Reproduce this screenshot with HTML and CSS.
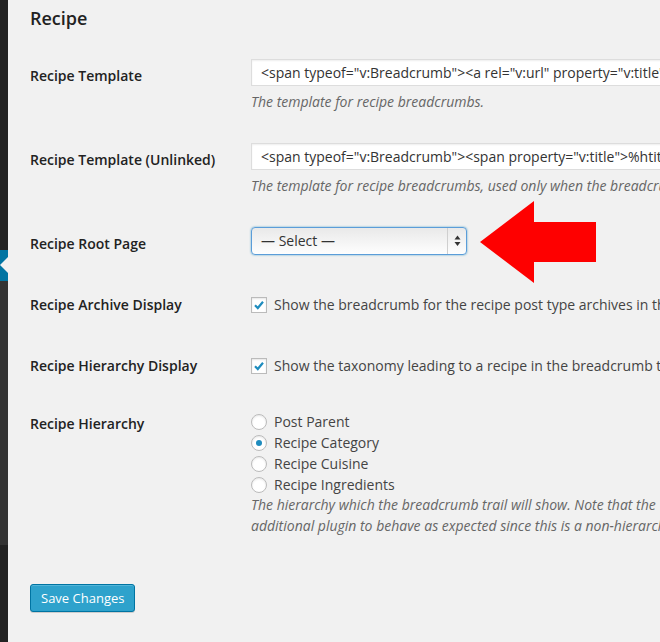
FILE: index.html
```html
<!DOCTYPE html>
<html>
<head>
<meta charset="utf-8">
<title>Recipe settings</title>
<link rel="stylesheet" href="styles.css">
</head>
<body>
<div class="admin">
  <div class="menu">
    <div class="menu-top"></div>
    <div class="menu-current"><span class="notch"></span></div>
    <div class="menu-sub"></div>
    <div class="menu-rest"></div>
  </div>
  <div class="content">
    <h3 class="section-title">Recipe</h3>
    <div class="form-table">
      <div class="row">
        <div class="label">Recipe Template</div>
        <div class="field">
          <input class="text-input" type="text" value='&lt;span typeof="v:Breadcrumb"&gt;&lt;a rel="v:url" property="v:title" href="%link%"&gt;%htitle%&lt;/a&gt;&lt;/span&gt;'>
          <p class="desc">The template for recipe breadcrumbs.</p>
        </div>
      </div>
      <div class="row">
        <div class="label">Recipe Template (Unlinked)</div>
        <div class="field">
          <input class="text-input" type="text" value='&lt;span typeof="v:Breadcrumb"&gt;&lt;span property="v:title"&gt;%htitle%&lt;/span&gt;&lt;/span&gt;'>
          <p class="desc">The template for recipe breadcrumbs, used only when the breadcrumb is not linked.</p>
        </div>
      </div>
      <div class="row row-select">
        <div class="label">Recipe Root Page</div>
        <div class="field">
          <div class="select">
            <span class="select-text">— Select —</span>
            <span class="select-arrows">
              <svg width="7" height="12" viewBox="0 0 7 12"><polygon points="3.5,0.5 6.5,4.5 0.5,4.5" fill="#333"/><polygon points="0.5,7 6.5,7 3.5,11" fill="#333"/></svg>
            </span>
          </div>
        </div>
      </div>
      <div class="row row-check">
        <div class="label">Recipe Archive Display</div>
        <div class="field">
          <label class="check-line"><span class="checkbox"><svg width="14" height="14" viewBox="0 0 14 14"><path d="M3 7.2 L5.8 10 L11 3.8" fill="none" stroke="#1e8cbe" stroke-width="2.2"/></svg></span>Show the breadcrumb for the recipe post type archives in the breadcrumb trail.</label>
        </div>
      </div>
      <div class="row row-check row-check-last">
        <div class="label">Recipe Hierarchy Display</div>
        <div class="field">
          <label class="check-line"><span class="checkbox"><svg width="14" height="14" viewBox="0 0 14 14"><path d="M3 7.2 L5.8 10 L11 3.8" fill="none" stroke="#1e8cbe" stroke-width="2.2"/></svg></span>Show the taxonomy leading to a recipe in the breadcrumb trail.</label>
        </div>
      </div>
      <div class="row row-radio">
        <div class="label">Recipe Hierarchy</div>
        <div class="field">
          <label class="radio-line"><span class="radio"></span>Post Parent</label>
          <label class="radio-line"><span class="radio checked"></span>Recipe Category</label>
          <label class="radio-line"><span class="radio"></span>Recipe Cuisine</label>
          <label class="radio-line"><span class="radio"></span>Recipe Ingredients</label>
          <p class="desc desc-multi"><span class="line">The hierarchy which the breadcrumb trail will show. Note that the "Post Parent" option may require an</span><span class="line">additional plugin to behave as expected since this is a non-hierarchical post type.</span></p>
        </div>
      </div>
    </div>
    <div class="submit">
      <button class="button-primary" type="button">Save Changes</button>
    </div>
    <svg class="callout-arrow" width="118" height="84" viewBox="0 0 118 84"><polygon points="0,41 54,0 54,21 116,21 116,61 54,61 54,82" fill="#fe0000"/></svg>
  </div>
</div>
</body>
</html>
```

FILE: styles.css
```css
html, body {
  margin: 0;
  padding: 0;
}
body {
  width: 660px;
  height: 642px;
  overflow: hidden;
  background: #f1f1f1;
  font-family: "Open Sans", "Liberation Sans", sans-serif;
  color: #444;
  font-size: 14px;
}
.admin {
  display: flex;
  min-height: 642px;
}
.menu {
  width: 8px;
  flex: none;
  display: flex;
  flex-direction: column;
  background: #222;
}
.menu-top {
  height: 250px;
}
.menu-current {
  height: 31px;
  background: #0074a2;
  position: relative;
}
.notch {
  position: absolute;
  right: 0;
  top: 7px;
  width: 0;
  height: 0;
  border-top: 8px solid transparent;
  border-bottom: 8px solid transparent;
  border-right: 8px solid #f1f1f1;
}
.menu-sub {
  height: 264px;
  background: #333;
}
.menu-rest {
  flex: 1;
}
.content {
  flex: 1;
  min-width: 0;
  padding-left: 22px;
  position: relative;
}
.section-title {
  margin: 6px 0 17px;
  font-size: 18px;
  line-height: 24px;
  font-weight: 600;
  color: #222;
}
.row {
  display: grid;
  grid-template-columns: 221px 1fr;
}
.label {
  padding-top: 20px;
  font-weight: 600;
  color: #222;
  line-height: 18px;
  white-space: nowrap;
}
.field {
  padding: 12px 0 20px;
  min-width: 0;
}
.text-input {
  display: block;
  box-sizing: border-box;
  width: 560px;
  height: 27px;
  margin: 0;
  padding: 0 9px;
  border: 1px solid #ddd;
  background: #fff;
  box-shadow: inset 0 1px 2px rgba(0, 0, 0, 0.07);
  font-family: "Open Sans", "Liberation Sans", sans-serif;
  font-size: 14px;
  color: #333;
  outline: none;
}
.desc {
  margin: 7px 0 0;
  font-size: 14px;
  line-height: 18px;
  font-style: italic;
  color: #666;
  white-space: nowrap;
}
.row-select .field {
  padding-bottom: 21px;
}
.select {
  box-sizing: border-box;
  width: 216px;
  height: 28px;
  display: flex;
  align-items: stretch;
  border: 1px solid #5b9dd9;
  border-radius: 4px;
  background: linear-gradient(#e9e9e9, #fefefe);
  box-shadow: 0 0 2px rgba(30, 140, 190, 0.8);
}
.select-text {
  flex: 1;
  padding-left: 9px;
  line-height: 26px;
  color: #333;
}
.select-arrows {
  width: 18px;
  border-left: 1px solid #cfcfcf;
  display: flex;
  align-items: center;
  justify-content: center;
}
.select-arrows svg {
  display: block;
}
.row-check .field {
  padding: 17px 0 20px;
}
.row-check-last .field {
  padding-bottom: 17px;
}
.check-line {
  display: flex;
  align-items: center;
  line-height: 24px;
  white-space: nowrap;
  color: #444;
}
.checkbox {
  box-sizing: border-box;
  width: 16px;
  height: 16px;
  flex: none;
  margin-right: 7px;
  border: 1px solid #bbb;
  background: #fff;
  box-shadow: inset 0 1px 2px rgba(0, 0, 0, 0.1);
  display: flex;
  align-items: center;
  justify-content: center;
}
.row-radio .field {
  padding-top: 16px;
}
.radio-line {
  display: flex;
  align-items: center;
  line-height: 21px;
  white-space: nowrap;
  color: #444;
}
.radio {
  box-sizing: border-box;
  width: 16px;
  height: 16px;
  flex: none;
  margin-right: 7px;
  border: 1px solid #bbb;
  border-radius: 50%;
  background: #fff;
  box-shadow: inset 0 1px 2px rgba(0, 0, 0, 0.1);
  display: flex;
  align-items: center;
  justify-content: center;
}
.radio.checked::after {
  content: "";
  width: 6px;
  height: 6px;
  border-radius: 50%;
  background: #1e8cbe;
}
.desc-multi {
  margin-top: 0;
  line-height: 20.5px;
}
.desc-multi .line {
  display: block;
}
.submit {
  padding-top: 28px;
}
.button-primary {
  box-sizing: border-box;
  height: 28px;
  margin: 0;
  padding: 0 10px;
  border: 1px solid #0074a2;
  border-radius: 3px;
  background: #2ea2cc;
  box-shadow: inset 0 1px 0 rgba(120, 200, 230, 0.5), 0 1px 0 rgba(0, 0, 0, 0.15);
  color: #fff;
  font-family: "Open Sans", "Liberation Sans", sans-serif;
  font-size: 13px;
  line-height: 26px;
}
.callout-arrow {
  position: absolute;
  left: 472px;
  top: 201px;
}
```
